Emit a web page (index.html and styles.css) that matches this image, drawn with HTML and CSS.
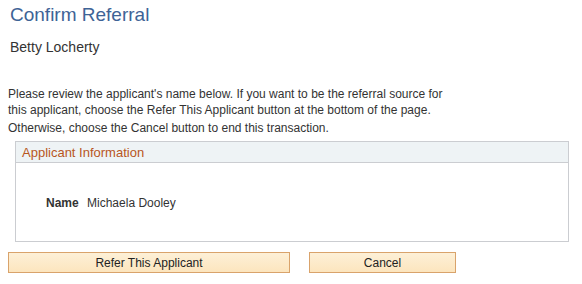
FILE: index.html
```html
<!DOCTYPE html>
<html>
<head>
<meta charset="utf-8">
<link rel="stylesheet" href="styles.css">
</head>
<body>
<div class="page">
  <h1 class="title">Confirm Referral</h1>
  <div class="person">Betty Locherty</div>
  <div class="intro">
    <p class="line">Please review the applicant's name below. If you want to be the referral source for this applicant, choose the Refer This Applicant button at the bottom of the page.</p>
    <p class="line2">Otherwise, choose the Cancel button to end this transaction.</p>
  </div>
  <div class="group">
    <div class="group-head">Applicant Information</div>
    <div class="group-body">
      <span class="label">Name</span>
      <span class="value">Michaela Dooley</span>
    </div>
  </div>
  <div class="actions">
    <button class="btn btn-refer">Refer This Applicant</button>
    <button class="btn btn-cancel">Cancel</button>
  </div>
</div>
</body>
</html>
```
FILE: styles.css
```css
* { box-sizing: border-box; }
html, body { margin: 0; padding: 0; background: #fff; }
body { font-family: "Liberation Sans", Arial, sans-serif; color: #333; }
.page { padding: 3px 0 0 0; }
.title {
  margin: 0 0 0 10px;
  font-size: 19px;
  font-weight: normal;
  color: #3e6396;
  line-height: 24px;
}
.person {
  margin: 11px 0 0 10px;
  font-size: 14px;
  line-height: 18px;
  color: #333;
}
.intro {
  margin: 30px 0 0 8px;
  width: 452px;
  font-size: 12px;
}
.intro p { margin: 0; }
.line { line-height: 16px; }
.line2 { line-height: 16px; margin-top: 2px !important; }
.group {
  margin: 5px 0 0 15px;
  width: 554px;
  border: 1px solid #cbcdd1;
}
.group-head {
  height: 21px;
  background: #eef3f5;
  border-bottom: 1px solid #cbcdd1;
  color: #b8561d;
  font-size: 13px;
  line-height: 20px;
  padding: 1px 0 0 6px;
}
.group-body {
  height: 78px;
  padding: 32px 0 0 30px;
  font-size: 12px;
  line-height: 16px;
}
.label { font-weight: bold; color: #333; margin-right: 5px; }
.value { color: #333; }
.actions {
  margin: 10px 0 0 8px;
  display: flex;
  gap: 19px;
}
.btn {
  height: 21px;
  border: 1px solid #d9a36b;
  background: linear-gradient(#fdf0d7, #fce5be);
  font-family: "Liberation Sans", Arial, sans-serif;
  font-size: 12px;
  color: #222;
  padding: 0;
  border-radius: 0;
}
.btn-refer { width: 282px; }
.btn-cancel { width: 147px; }
```
